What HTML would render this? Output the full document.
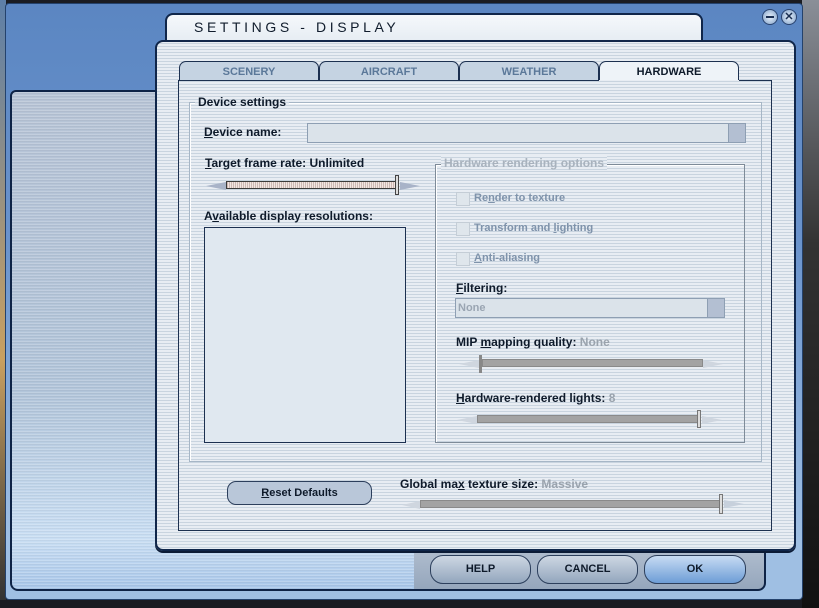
<!DOCTYPE html>
<html><head><meta charset="utf-8"><style>
*{margin:0;padding:0;box-sizing:border-box}
body{width:819px;height:608px;overflow:hidden;background:#1a1c22;font-family:"Liberation Sans",sans-serif;position:relative}
.a{position:absolute}
.str{background:repeating-linear-gradient(#e8edf3 0 1px,#c9d4df 1px 2px,#e8edf3 2px 3px)}
.lbl{font-size:12px;font-weight:bold;color:#0e1a2a;white-space:nowrap}
.dis{color:#7f93ab}
.gray{color:#9aa3ad}
u{text-decoration:underline}
.tab{top:61px;height:20px;width:140px;border:1px solid #1c3050;border-bottom:none;border-radius:7px 7px 0 0;background:#c5d3e2;font-size:11px;font-weight:bold;color:#5b7899;text-align:center;line-height:20px}
.track{height:8px;border:1px solid #58606a;background:repeating-linear-gradient(90deg,#a7a7a7 0 1px,#c9c9c9 1px 2px)}
.btn{border:1px solid #2c3f5c;border-radius:9px;background:linear-gradient(#e4ebf3,#a8b8cc);font-size:11px;font-weight:bold;color:#0e1a2a;text-align:center}
.cb{width:14px;height:14px;background:#dfe6ec;border:1px solid #c4cdd6}
</style></head><body>
<div class="a" style="left:802px;top:0;width:17px;height:608px;background:linear-gradient(#8a8f98,#333 40%,#111)"></div>
<div class="a" style="left:0;top:0;width:6px;height:600px;background:linear-gradient(#5d7fa8,#c9a060 60%,#333)"></div>
<div class="a" style="left:5px;top:3px;width:798px;height:597px;background:linear-gradient(#5b86c2,#6a93cc 40%,#9fbfe3 90%);border:1px solid #24426c;border-radius:4px"></div>
<div class="a" style="left:10px;top:90px;width:406px;height:501px;border:2px solid #0e2346;border-radius:6px 0 0 8px;background:linear-gradient(#b7c4d6,#b2c5da 60%,#c9def3 90%,#a9c7ea)"></div>
<div class="a" style="left:12px;top:92px;width:402px;height:497px;background:repeating-linear-gradient(rgba(255,255,255,.18) 0 1px,rgba(0,0,0,.04) 1px 2px,transparent 2px 3px);border-radius:5px"></div>
<div class="a" style="left:414px;top:540px;width:352px;height:51px;background:linear-gradient(#b5c2d2,#95a6bc);border:2px solid #0e2346;border-left:none;border-radius:0 0 8px 0"></div>
<div class="a btn" style="left:430px;top:555px;width:101px;height:29px;line-height:27px;border-radius:13px;background:linear-gradient(#cdd7e3,#93a6bd)">HELP</div>
<div class="a btn" style="left:537px;top:555px;width:101px;height:29px;line-height:27px;border-radius:13px;background:linear-gradient(#cdd7e3,#93a6bd)">CANCEL</div>
<div class="a btn" style="left:644px;top:555px;width:102px;height:29px;line-height:27px;border-radius:13px;background:linear-gradient(#c7dbf3,#6d9dd6)">OK</div>
<div class="a" style="left:165px;top:13px;width:538px;height:34px;border:2px solid #10264a;border-bottom:none;border-radius:8px 8px 0 0;background:linear-gradient(#f5f8fb,#e3eaf1)"></div>
<div class="a" style="left:194px;top:19px;font-size:14px;letter-spacing:3.6px;color:#101c2c">SETTINGS - DISPLAY</div>
<div class="a" style="left:762px;top:9px;width:16px;height:16px;border-radius:50%;background:radial-gradient(#e9f2fb,#7e9fc8);border:1px solid #2a4470"></div>
<div class="a" style="left:766px;top:16px;width:8px;height:2px;background:#1a2f52"></div>
<div class="a" style="left:781px;top:9px;width:16px;height:16px;border-radius:50%;background:radial-gradient(#e9f2fb,#7e9fc8);border:1px solid #2a4470;font-size:11px;font-weight:bold;color:#1a2f52;text-align:center;line-height:14px">✕</div>
<div class="a str" style="left:155px;top:40px;width:641px;height:511px;border:2px solid #10264a;border-radius:8px;box-shadow:0 2px 0 #0b1b36"></div>
<div class="a tab" style="left:179px">SCENERY</div>
<div class="a tab" style="left:319px">AIRCRAFT</div>
<div class="a tab" style="left:459px">WEATHER</div>
<div class="a tab" style="left:599px;background:#eef3f8;color:#0e1a2a;height:21px">HARDWARE</div>
<div class="a str" style="left:178px;top:80px;width:594px;height:451px;border:1px solid #1c3050;border-top:none"></div>
<div class="a" style="left:178px;top:80px;width:421px;height:1px;background:#1c3050"></div>
<div class="a" style="left:739px;top:80px;width:33px;height:1px;background:#1c3050"></div>
<div class="a" style="left:189px;top:102px;width:573px;height:360px;border:1px solid #a6b6c6;box-shadow:inset 1px 1px 0 #fff"></div>
<div class="a lbl str" style="left:195px;top:95px;padding:0 3px;font-size:12px">Device settings</div>
<div class="a lbl" style="left:204px;top:125px"><u>D</u>evice name:</div>
<div class="a" style="left:307px;top:123px;width:439px;height:20px;background:#dbe3ea;border:1px solid #8e9fb3"></div>
<div class="a" style="left:728px;top:124px;width:17px;height:18px;background:#b3bfd2;border-left:1px solid #8e9fb3"></div>
<div class="a lbl" style="left:205px;top:156px"><u>T</u>arget frame rate: Unlimited</div>
<div class="a" style="left:206px;top:182px;width:0;height:0;border-right:20px solid #a8b3c8;border-top:4px solid transparent;border-bottom:4px solid transparent"></div>
<div class="a track" style="left:226px;top:181px;width:170px;background:repeating-linear-gradient(90deg,#cdb8b4 0 1px,#f2e6e2 1px 2px);border-color:#3b3b3b"></div>
<div class="a" style="left:395px;top:175px;width:4px;height:20px;border:1px solid #444;background:#ddd"></div>
<div class="a" style="left:400px;top:182px;width:0;height:0;border-left:20px solid #a8b3c8;border-top:4px solid transparent;border-bottom:4px solid transparent"></div>
<div class="a lbl" style="left:204px;top:209px">A<u>v</u>ailable display resolutions:</div>
<div class="a" style="left:204px;top:227px;width:202px;height:216px;background:#e0e8f0;border:1px solid #1c3050"></div>
<div class="a" style="left:435px;top:164px;width:310px;height:279px;border:1px solid #7e8b98;box-shadow:inset 1px 1px 0 #fff"></div>
<div class="a lbl str gray" style="left:441px;top:156px;padding:0 3px;color:#a8b2bd">Hardware rendering options</div>
<div class="a cb" style="left:456px;top:192px"></div><div class="a lbl dis" style="left:474px;top:192px;font-size:11px">Re<u>n</u>der to texture</div>
<div class="a cb" style="left:456px;top:222px"></div><div class="a lbl dis" style="left:474px;top:222px;font-size:11px">Transform and <u>l</u>ighting</div>
<div class="a cb" style="left:456px;top:252px"></div><div class="a lbl dis" style="left:474px;top:252px;font-size:11px"><u>A</u>nti-aliasing</div>
<div class="a lbl" style="left:456px;top:281px"><u>F</u>iltering:</div>
<div class="a" style="left:455px;top:298px;width:270px;height:20px;background:#dbe3ea;border:1px solid #8e9fb3;font-size:11px;font-weight:bold;color:#9aa5b2;padding:3px 2px">None</div>
<div class="a" style="left:707px;top:299px;width:17px;height:18px;background:#b3bfd2;border-left:1px solid #8e9fb3"></div>
<div class="a lbl" style="left:456px;top:335px">MIP <u>m</u>apping quality: <span class="gray">None</span></div>
<div class="a" style="left:459px;top:360px;width:0;height:0;border-right:20px solid #cfd6df;border-top:4px solid transparent;border-bottom:4px solid transparent"></div>
<div class="a" style="left:479px;top:355px;width:3px;height:18px;background:#888"></div>
<div class="a track" style="left:482px;top:359px;width:221px;background:#a3a3a3;border-color:#8a8a8a"></div>
<div class="a" style="left:703px;top:360px;width:0;height:0;border-left:20px solid #cfd6df;border-top:4px solid transparent;border-bottom:4px solid transparent"></div>
<div class="a lbl" style="left:456px;top:391px"><u>H</u>ardware-rendered lights: <span class="gray">8</span></div>
<div class="a" style="left:457px;top:416px;width:0;height:0;border-right:20px solid #cfd6df;border-top:4px solid transparent;border-bottom:4px solid transparent"></div>
<div class="a track" style="left:477px;top:415px;width:221px;background:#a3a3a3;border-color:#8a8a8a"></div>
<div class="a" style="left:697px;top:410px;width:4px;height:18px;border:1px solid #777;background:#ddd"></div>
<div class="a" style="left:702px;top:416px;width:0;height:0;border-left:20px solid #cfd6df;border-top:4px solid transparent;border-bottom:4px solid transparent"></div>
<div class="a btn" style="left:227px;top:481px;width:145px;height:24px;line-height:22px;background:#b9c7d9"><u>R</u>eset Defaults</div>
<div class="a lbl" style="left:400px;top:477px">Global ma<u>x</u> texture size: <span class="gray">Massive</span></div>
<div class="a" style="left:402px;top:501px;width:0;height:0;border-right:18px solid #cfd6df;border-top:4px solid transparent;border-bottom:4px solid transparent"></div>
<div class="a track" style="left:420px;top:500px;width:300px;background:#a3a3a3;border-color:#8a8a8a"></div>
<div class="a" style="left:719px;top:494px;width:4px;height:20px;border:1px solid #777;background:#ddd"></div>
<div class="a" style="left:724px;top:500px;width:0;height:0;border-left:20px solid #c7d0dc;border-top:4px solid transparent;border-bottom:4px solid transparent"></div>
</body></html>
